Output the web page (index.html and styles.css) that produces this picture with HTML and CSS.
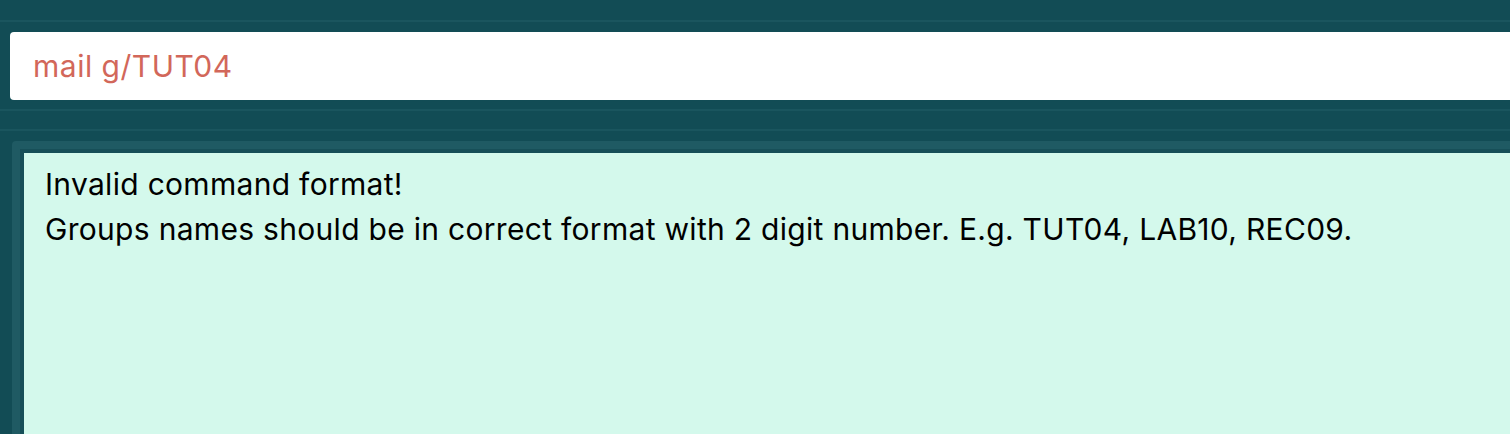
FILE: index.html
```html
<!DOCTYPE html>
<html lang="en">
<head>
<meta charset="utf-8">
<title>Command box</title>
<link rel="stylesheet" href="styles.css">
</head>
<body>
<div class="app">
  <div class="topbar"></div>
  <div class="divider"></div>
  <div class="command-pane">
    <div class="command-box">mail g/TUT04</div>
  </div>
  <div class="divider"></div>
  <div class="spacer"></div>
  <div class="divider"></div>
  <div class="result-pane">
    <div class="result-frame">
      <div class="result-box">
        <div class="result-line">Invalid command format!</div>
        <div class="result-line">Groups names should be in correct format with 2 digit number. E.g. TUT04, LAB10, REC09.</div>
      </div>
    </div>
  </div>
</div>
</body>
</html>
```

FILE: styles.css
```css
html, body {
  margin: 0;
  padding: 0;
  height: 100%;
  overflow: hidden;
}
body {
  background: #124c55;
  font-family: Inter, "Open Sans", sans-serif;
}
.app {
  display: flex;
  flex-direction: column;
  height: 100%;
}
.topbar {
  height: 20px;
}
.divider {
  height: 2px;
  background: #1a555e;
}
.command-pane {
  padding: 10px 0 9px 10px;
}
.command-box {
  height: 68px;
  background: #ffffff;
  border-radius: 4px 0 0 4px;
  padding-left: 23px;
  display: flex;
  align-items: center;
  font-size: 30px;
  letter-spacing: 0.5px;
  color: #d2675a;
  margin-right: -10px;
}
.spacer {
  height: 18px;
}
.result-pane {
  flex: 1;
  padding: 10px 0 0 12px;
  display: flex;
  flex-direction: column;
}
.result-frame {
  flex: 1;
  background: #1f5a63;
  border-radius: 4px 0 0 0;
  padding: 8px 0 0 8px;
  display: flex;
  flex-direction: column;
}
.result-box {
  flex: 1;
  background: #d4f9ec;
  border-top: 4px solid #174f58;
  border-left: 4px solid #174f58;
  padding: 9px 0 0 21px;
  font-size: 30px;
  letter-spacing: 0.3px;
  line-height: 45px;
  color: #000;
  white-space: nowrap;
}
```
